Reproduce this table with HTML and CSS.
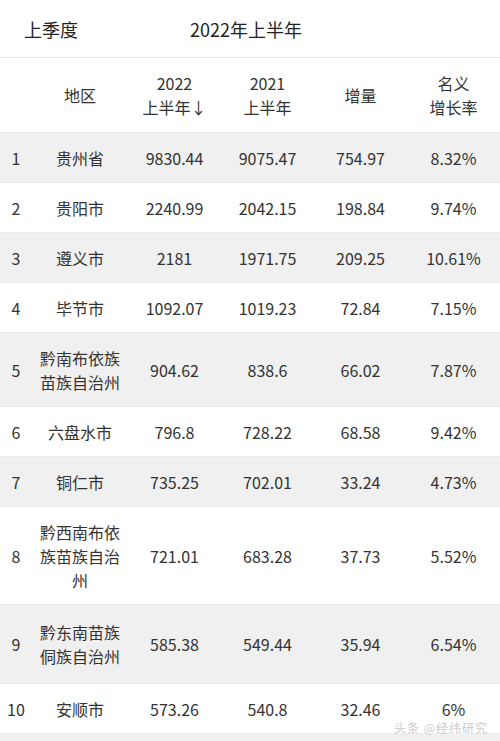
FILE: index.html
```html
<!DOCTYPE html>
<html lang="zh-CN">
<head>
<meta charset="utf-8">
<link rel="stylesheet" href="styles.css">
</head>
<body>
<div class="page">
  <div class="tabs">
    <div class="tab tab-first">上季度</div>
    <div class="tab">2022年上半年</div>
  </div>
  <table class="data">
    <colgroup>
      <col class="c-idx"><col class="c-region"><col class="c-num"><col class="c-num"><col class="c-num"><col class="c-num">
    </colgroup>
    <thead>
      <tr><th></th><th>地区</th><th>2022<br>上半年↓</th><th>2021<br>上半年</th><th>增量</th><th>名义<br>增长率</th></tr>
    </thead>
    <tbody>
      <tr><td>1</td><td>贵州省</td><td>9830.44</td><td>9075.47</td><td>754.97</td><td>8.32%</td></tr>
      <tr><td>2</td><td>贵阳市</td><td>2240.99</td><td>2042.15</td><td>198.84</td><td>9.74%</td></tr>
      <tr><td>3</td><td>遵义市</td><td>2181</td><td>1971.75</td><td>209.25</td><td>10.61%</td></tr>
      <tr><td>4</td><td>毕节市</td><td>1092.07</td><td>1019.23</td><td>72.84</td><td>7.15%</td></tr>
      <tr><td>5</td><td>黔南布依族苗族自治州</td><td>904.62</td><td>838.6</td><td>66.02</td><td>7.87%</td></tr>
      <tr><td>6</td><td>六盘水市</td><td>796.8</td><td>728.22</td><td>68.58</td><td>9.42%</td></tr>
      <tr><td>7</td><td>铜仁市</td><td>735.25</td><td>702.01</td><td>33.24</td><td>4.73%</td></tr>
      <tr><td>8</td><td>黔西南布依族苗族自治州</td><td>721.01</td><td>683.28</td><td>37.73</td><td>5.52%</td></tr>
      <tr class="tall"><td>9</td><td>黔东南苗族侗族自治州</td><td>585.38</td><td>549.44</td><td>35.94</td><td>6.54%</td></tr>
      <tr><td>10</td><td>安顺市</td><td>573.26</td><td>540.8</td><td>32.46</td><td>6%</td></tr>
      <tr class="tail"><td></td><td></td><td></td><td></td><td></td><td></td></tr>
    </tbody>
  </table>
  <div class="watermark">头条 @经纬研究</div>
</div>
</body>
</html>
```

FILE: styles.css
```css
html, body {
  margin: 0;
  padding: 0;
  background: #ffffff;
}
body {
  font-family: "Noto Sans CJK SC", "Noto Sans", sans-serif;
  color: #333333;
}
.page {
  position: relative;
  width: 500px;
  height: 741px;
  overflow: hidden;
}
.tabs {
  display: flex;
  align-items: center;
  height: 57px;
  padding-left: 24px;
  border-bottom: 1px solid #e6e6e6;
  font-size: 18px;
  color: #222222;
}
.tab-first {
  width: 166px;
}
.data {
  width: 500px;
  border-collapse: collapse;
  table-layout: fixed;
  font-size: 16px;
  line-height: 24px;
}
.c-idx { width: 32px; }
.c-region { width: 96px; }
.c-num { width: 93px; }
.data th, .data td {
  padding: 13px 6px 12px;
  text-align: center;
  vertical-align: middle;
  font-weight: normal;
}
.data th:first-child, .data td:first-child {
  padding-left: 0;
  padding-right: 0;
}
.data th {
  color: #333333;
  padding-bottom: 13px;
}
.data tbody tr {
  border-top: 1px solid #ececec;
}
.data tbody tr:nth-child(odd) {
  background: #f0f0f0;
}
.data tbody tr.tall td {
  padding-top: 15px;
  padding-bottom: 15px;
}
.data tbody tr.tail td {
  padding: 0;
  height: 8px;
}
.watermark {
  position: absolute;
  right: 12px;
  top: 721px;
  font-size: 12px;
  line-height: 14px;
  color: #cccccc;
  letter-spacing: 1px;
}
```
